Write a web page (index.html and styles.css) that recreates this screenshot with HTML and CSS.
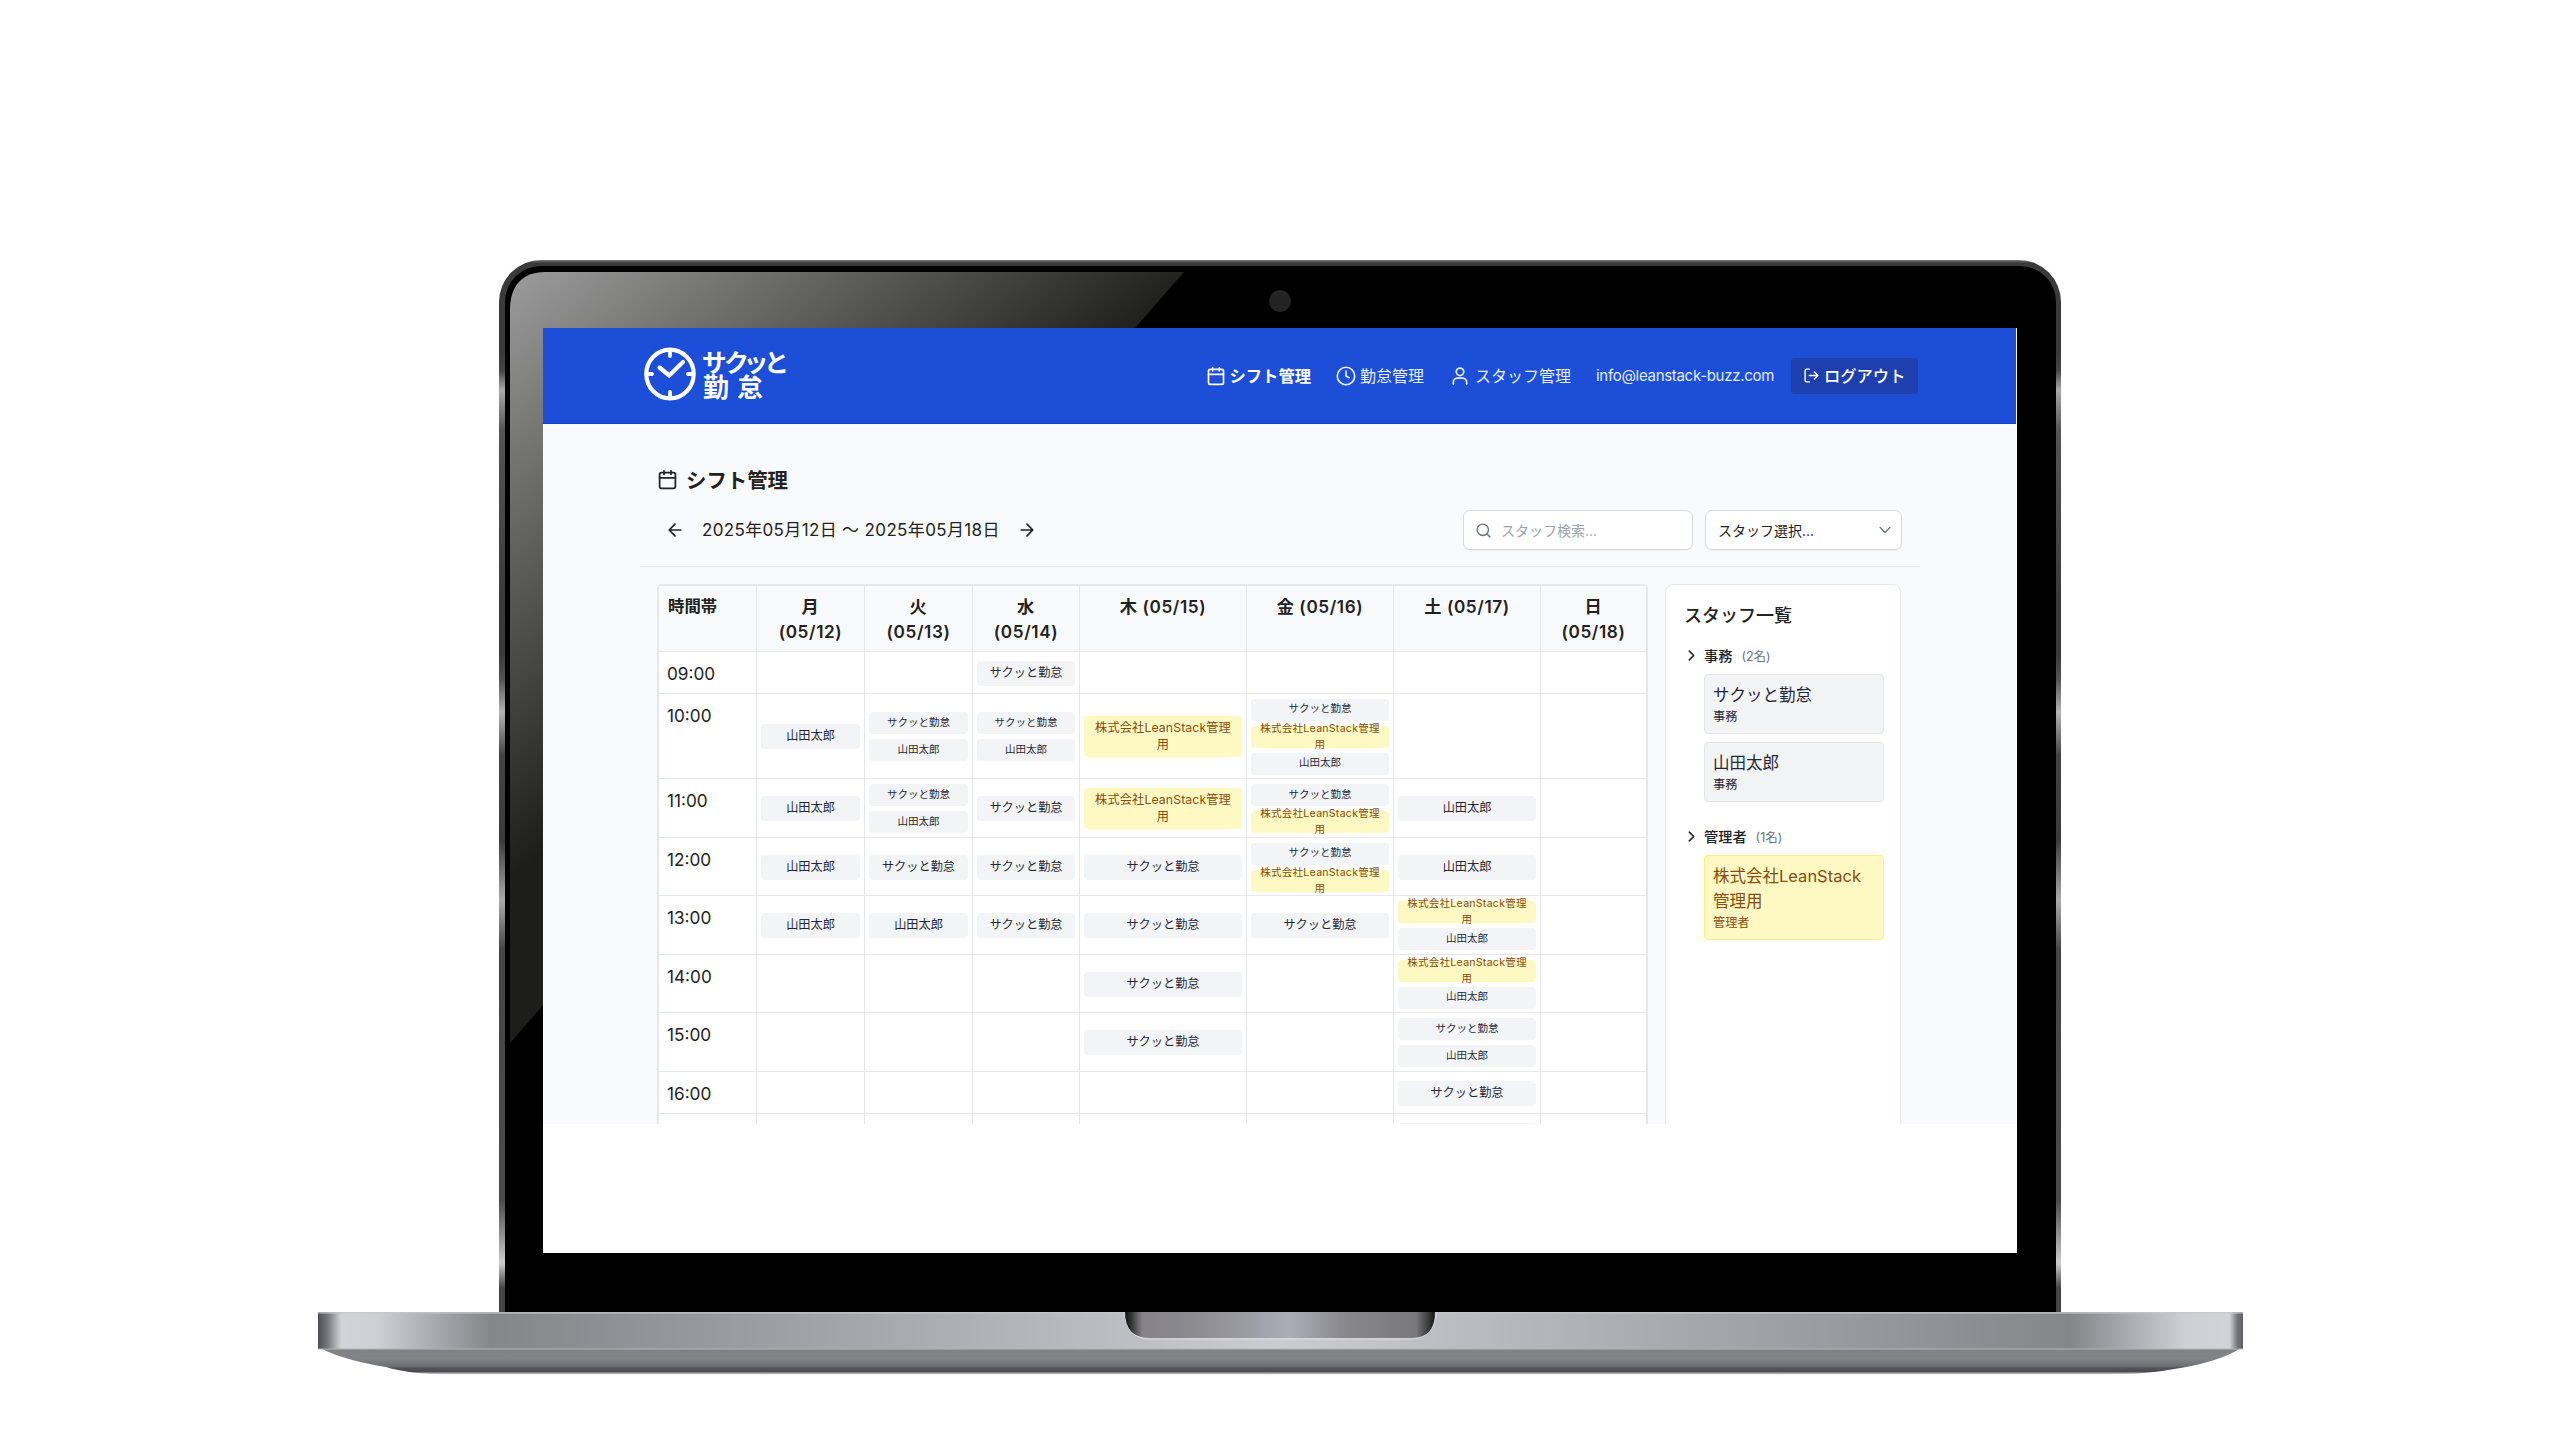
FILE: index.html
```html
<!DOCTYPE html>
<html lang="ja">
<head>
<meta charset="utf-8">
<title>サクッと勤怠 - シフト管理</title>
<link rel="stylesheet" href="styles.css">
</head>
<body>
<div class="laptop">
  <div class="lid">
    <svg class="glare" viewBox="0 0 1551 1040" preserveAspectRatio="none">
      <defs>
        <linearGradient id="shine" gradientUnits="userSpaceOnUse" x1="0" y1="0" x2="300" y2="348">
          <stop offset="0" stop-color="#9c9c9c"/>
          <stop offset="1" stop-color="#1d1d1b"/>
        </linearGradient>
      </defs>
      <path d="M35 0H674L0 771V38C0 14 12 0 35 0Z" fill="url(#shine)"/>
    </svg>
    <span class="camera"></span>
    <div class="screen">
      <div class="app">
        <header class="topbar">
          <div class="brand">
            <svg class="brand-clock" viewBox="0 0 52 54" fill="none" stroke="#fff" stroke-linecap="round">
              <ellipse cx="26" cy="27" rx="23.7" ry="24.4" stroke-width="4.2"/>
              <path d="M26 4v5M26 45v5M3 27h5M44 27h5" stroke-width="3.8"/>
              <path d="M15.5 20.5l9.8 8L39 15" stroke-width="4.2" stroke-linejoin="round"/>
            </svg>
            <div class="brand-name"><span class="brand-top">サクッと</span><span class="brand-bottom">勤怠</span></div>
          </div>
          <nav class="nav">
            <a class="nav-item active n1"><svg class="ic" viewBox="0 0 24 24"><rect x="3" y="4" width="18" height="18" rx="2"/><path d="M8 2v4M16 2v4M3 10h18"/></svg>シフト管理</a>
            <a class="nav-item n2"><svg class="ic" viewBox="0 0 24 24"><circle cx="12" cy="12" r="10.5"/><path d="M12 6v6l4 2"/></svg>勤怠管理</a>
            <a class="nav-item n3"><svg class="ic" viewBox="0 0 24 24"><circle cx="12" cy="7" r="4.5"/><path d="M20 22v-2.500a5 5 0 0 0-5-5H9a5 5 0 0 0-5 5V22"/></svg>スタッフ管理</a>
            <span class="email">info@leanstack-buzz.com</span>
            <a class="logout"><svg class="ic" viewBox="0 0 24 24"><path d="M9 21H5a2 2 0 0 1-2-2V5a2 2 0 0 1 2-2h4M16 17l5-5-5-5M21 12H9"/></svg>ログアウト</a>
          </nav>
        </header>
        <main class="main">
          <h1 class="title"><svg class="ic" viewBox="0 0 24 24"><rect x="3" y="4" width="18" height="18" rx="2"/><path d="M8 2v4M16 2v4M3 10h18"/></svg>シフト管理</h1>
          <div class="toolbar">
            <div class="range">
              <svg class="ic" viewBox="0 0 24 24"><path d="M12 19l-7-7 7-7M19 12H5"/></svg>
              <span class="dates">2025年05月12日 〜 2025年05月18日</span>
              <svg class="ic" viewBox="0 0 24 24"><path d="M5 12h14M12 5l7 7-7 7"/></svg>
            </div>
            <div class="search"><svg class="ic" viewBox="0 0 24 24"><circle cx="11" cy="11" r="8"/><path d="M21 21l-4.300-4.300"/></svg>スタッフ検索...</div>
            <div class="select">スタッフ選択...<svg class="ic" viewBox="0 0 24 24"><path d="M3.500 7.500l8.500 9 8.500-9"/></svg></div>
          </div>
          <div class="columns">
            <section class="schedule">
              <div class="th first">時間帯</div><div class="th">月<br>(05/12)</div><div class="th">火<br>(05/13)</div><div class="th">水<br>(05/14)</div><div class="th">木 (05/15)</div><div class="th">金 (05/16)</div><div class="th">土 (05/17)</div><div class="th">日<br>(05/18)</div>

              <div class="time">09:00</div><div class="td"></div><div class="td"></div><div class="td"><b>サクッと勤怠</b></div><div class="td"></div><div class="td"></div><div class="td"></div><div class="td"></div>

              <div class="time">10:00</div><div class="td"><b>山田太郎</b></div><div class="td multi"><b>サクッと勤怠</b><b>山田太郎</b></div><div class="td multi"><b>サクッと勤怠</b><b>山田太郎</b></div><div class="td"><b class="admin">株式会社LeanStack管理<br>用</b></div><div class="td multi"><b>サクッと勤怠</b><b class="admin">株式会社LeanStack管理<br>用</b><b>山田太郎</b></div><div class="td"></div><div class="td"></div>

              <div class="time">11:00</div><div class="td"><b>山田太郎</b></div><div class="td multi"><b>サクッと勤怠</b><b>山田太郎</b></div><div class="td"><b>サクッと勤怠</b></div><div class="td"><b class="admin">株式会社LeanStack管理<br>用</b></div><div class="td multi"><b>サクッと勤怠</b><b class="admin">株式会社LeanStack管理<br>用</b></div><div class="td"><b>山田太郎</b></div><div class="td"></div>

              <div class="time">12:00</div><div class="td"><b>山田太郎</b></div><div class="td"><b>サクッと勤怠</b></div><div class="td"><b>サクッと勤怠</b></div><div class="td"><b>サクッと勤怠</b></div><div class="td multi"><b>サクッと勤怠</b><b class="admin">株式会社LeanStack管理<br>用</b></div><div class="td"><b>山田太郎</b></div><div class="td"></div>

              <div class="time">13:00</div><div class="td"><b>山田太郎</b></div><div class="td"><b>山田太郎</b></div><div class="td"><b>サクッと勤怠</b></div><div class="td"><b>サクッと勤怠</b></div><div class="td"><b>サクッと勤怠</b></div><div class="td multi"><b class="admin">株式会社LeanStack管理<br>用</b><b>山田太郎</b></div><div class="td"></div>

              <div class="time">14:00</div><div class="td"></div><div class="td"></div><div class="td"></div><div class="td"><b>サクッと勤怠</b></div><div class="td"></div><div class="td multi"><b class="admin">株式会社LeanStack管理<br>用</b><b>山田太郎</b></div><div class="td"></div>

              <div class="time">15:00</div><div class="td"></div><div class="td"></div><div class="td"></div><div class="td"><b>サクッと勤怠</b></div><div class="td"></div><div class="td multi"><b>サクッと勤怠</b><b>山田太郎</b></div><div class="td"></div>

              <div class="time">16:00</div><div class="td"></div><div class="td"></div><div class="td"></div><div class="td"></div><div class="td"></div><div class="td"><b>サクッと勤怠</b></div><div class="td"></div>

              <div class="time"></div><div class="td"></div><div class="td"></div><div class="td"></div><div class="td"></div><div class="td"></div><div class="td"><b></b></div><div class="td"></div>
            </section>
            <aside class="staff">
              <h2>スタッフ一覧</h2>
              <div class="group"><svg class="ic" viewBox="0 0 24 24"><path d="M8 4l8 8-8 8"/></svg>事務<small>(2名)</small></div>
              <div class="person"><span>サクッと勤怠</span><em>事務</em></div>
              <div class="person"><span>山田太郎</span><em>事務</em></div>
              <div class="group second"><svg class="ic" viewBox="0 0 24 24"><path d="M8 4l8 8-8 8"/></svg>管理者<small>(1名)</small></div>
              <div class="person admin"><span>株式会社LeanStack<br>管理用</span><em>管理者</em></div>
            </aside>
          </div>
        </main>
      </div>
    </div>
  </div>
  <svg class="base" viewBox="0 0 1925 64">
    <defs>
      <linearGradient id="deck" gradientUnits="userSpaceOnUse" x1="0" x2="1925" y1="0" y2="0">
        <stop offset="0" stop-color="#4d4d54"/><stop offset=".005" stop-color="#77777e"/><stop offset=".012" stop-color="#d2d3d8"/><stop offset=".03" stop-color="#cfd0d5"/><stop offset=".09" stop-color="#85868a"/>
        <stop offset=".5" stop-color="#cbccd2"/><stop offset=".91" stop-color="#85868a"/><stop offset=".97" stop-color="#cfd0d5"/><stop offset=".993" stop-color="#d2d3d8"/><stop offset=".997" stop-color="#77777e"/><stop offset="1" stop-color="#5d5d64"/>
      </linearGradient>
      <linearGradient id="under" x1="0" x2="0" y1="0" y2="1">
        <stop offset="0" stop-color="#808185"/><stop offset=".4" stop-color="#828387"/><stop offset=".68" stop-color="#707175"/><stop offset=".76" stop-color="#535258"/><stop offset=".9" stop-color="#4b4a51"/><stop offset=".93" stop-color="#8d8b90"/><stop offset="1" stop-color="#e4e3e5"/>
      </linearGradient>
      <linearGradient id="notch" x1="0" x2="1" y1="0" y2="0">
        <stop offset="0" stop-color="#111"/><stop offset=".02" stop-color="#333"/><stop offset=".055" stop-color="#858389"/><stop offset=".2" stop-color="#8a898e"/><stop offset=".4" stop-color="#9d9da4"/><stop offset=".53" stop-color="#adadb8"/><stop offset=".7" stop-color="#89898d"/><stop offset=".94" stop-color="#78787d"/><stop offset=".98" stop-color="#3a3a3d"/><stop offset="1" stop-color="#111"/>
      </linearGradient>
      <filter id="soft" x="-1%" y="-10%" width="102%" height="120%"><feGaussianBlur stdDeviation=".7"/></filter>
    </defs>
    <path d="M2 36H1923Q1900 51 1850 58Q1828 62 1790 62.500H130Q90 62 68 55Q25 48 2 36Z" fill="url(#under)" filter="url(#soft)"/>
    <path d="M0 0H1925V37H0Z" fill="url(#deck)"/>
    <path d="M0 .8H1925" stroke="#c6c6ca" stroke-width="1.200"/>
    <path d="M0 37H1925" stroke="#b4b5b9" stroke-width="1"/>
    <path d="M807 0V4Q810 27 832 27H1092Q1114 27 1118 4V0" fill="none" stroke="#dddee3" stroke-width="1"/>
    <path d="M807 0H1117Q1117 26 1094 26H832Q807 26 807 0Z" fill="url(#notch)"/>
  </svg>
</div>
</body>
</html>
```
FILE: styles.css
```css
* { box-sizing: border-box; }

body {
  margin: 0;
  width: 2560px;
  height: 1440px;
  overflow: hidden;
  background: #fff;
  color: #222;
  font-family: "Inter", "Noto Sans CJK JP", sans-serif;
}

.laptop { padding-top: 260px; }

/* lid */
.lid {
  position: relative;
  width: 1562px;
  height: 1052px;
  margin-left: 499px;
  padding: 68px 44px 0 44px;
  border-radius: 42px 42px 0 0;
  background: linear-gradient(#777, #3a3a3a 3px, #3a3a3a 90px, #444 110px, #aaa 130px, #555 170px, #3a3a3a 340px, #3a3a3a 395px, #555 420px, #b5b5b5 452px, #444 495px, #3a3a3a 580px, #aaa 640px, #444 690px, #4a4a4a 940px, #ccc 1003px, #444 1028px, #444);
}
.lid::before {
  content: "";
  position: absolute;
  inset: 6px 5px 0 6px;
  border-radius: 36px 36px 0 0;
  background: #000;
}
.glare {
  position: absolute;
  left: 11px;
  top: 12px;
  width: 1551px;
  height: 1040px;
}
.camera {
  position: absolute;
  left: 770px;
  top: 30px;
  width: 22px;
  height: 22px;
  border-radius: 50%;
  background: #232323;
}
.screen {
  position: relative;
  width: 1474px;
  height: 925px;
  background: #fff;
}
.app {
  height: 796px;
  overflow: hidden;
  background: #f9fafc;
}
.base {
  display: block;
  width: 1925px;
  height: 64px;
  margin-left: 318px;
}

.ic {
  flex: none;
  fill: none;
  stroke: currentColor;
  stroke-width: 2;
  stroke-linecap: round;
  stroke-linejoin: round;
}

/* top bar */
.topbar {
  display: flex;
  justify-content: space-between;
  width: 1473px;
  height: 96px;
  padding: 0 98px 0 101px;
  background: #1d4ed8;
  border-bottom: 1px solid #1240c8;
  color: #fff;
}
.brand { display: flex; padding-top: 19px; }
.brand-clock { width: 52px; height: 54px; }
.brand-name {
  display: flex;
  flex-direction: column;
  padding: 2px 0 0 6px;
  font: 700 26px/25px "Noto Sans CJK JP", sans-serif;
  white-space: nowrap;
}
.brand-top { font-size: 25px; font-feature-settings: "palt"; letter-spacing: -1.300px; }
.brand-bottom { font-size: 26px; line-height: 24px; letter-spacing: 8px; padding-left: 1px; }

.nav {
  display: flex;
  align-items: center;
  height: 95px;
  font-size: 16px;
  line-height: 24px;
  white-space: nowrap;
}
.nav-item { display: flex; align-items: center; }
.nav .ic { width: 20px; height: 20px; margin-right: 4px; }
.active { font-weight: 700; font-size: 16.300px; }
.n2, .n3 { color: #e6eeff; }
.n2 { margin-left: 25px; }
.n3 { margin-left: 26px; }
.n3 .ic { margin-right: 5px; }
.email { margin-left: 25px; width: 178px; font-size: 15px; letter-spacing: -.3px; color: #e3ebff; }
.nav .logout {
  display: flex;
  align-items: center;
  width: 127px;
  height: 36px;
  margin-left: 17px;
  padding-left: 12px;
  border-radius: 4px;
  background: #1e40af;
  font-size: 16.300px;
  font-weight: 500;
}
.nav .logout .ic { width: 17px; height: 17px; margin-right: 4px; }

/* page */
.main { padding: 41px 97px 0; }
.title {
  display: flex;
  align-items: center;
  margin: 0 0 0 17px;
  height: 28px;
  font-size: 20.400px;
  font-weight: 700;
}
.title .ic { width: 21px; height: 21px; margin: 0 8px 0 0; }

.toolbar {
  display: flex;
  align-items: center;
  height: 74px;
  margin-bottom: 17px;
  padding: 1px 18px 0 25px;
  border-bottom: 1px solid #e5e7eb;
  white-space: nowrap;
}
.range { display: flex; align-items: center; margin-right: auto; }
.range .ic { width: 20px; height: 20px; }
.dates { width: 298px; margin: 0 17px 0 17px; font-size: 17px; line-height: 24px; letter-spacing: .35px; }
.search, .select {
  display: flex;
  align-items: center;
  height: 40px;
  border: 1px solid #d6d9df;
  border-radius: 7px;
  background: #fff;
  font-size: 14px;
  box-shadow: 0 1px 1px rgba(0, 0, 0, .04);
}
.search { width: 230px; padding-left: 11px; color: #9ca3af; }
.search .ic { width: 17px; height: 17px; margin-right: 9px; color: #6b7280; }
.select { justify-content: space-between; width: 197px; margin-left: 12px; padding: 0 9px 0 12px; }
.select .ic { width: 14px; height: 14px; color: #555b66; }

.columns { display: flex; align-items: flex-start; gap: 17px; padding-left: 17px; }

/* weekly grid */
.schedule {
  display: grid;
  grid-template-columns: 98px 108px 108px 107px 167px 147px 147px 105px;
  grid-template-rows: 66px 42px 85px 59px 58px 59px 58px 59px 42px 42px;
  border: 2px solid #e5e7eb;
  border-radius: 5px 5px 0 0;
  background: #fff;
}
.th, .td, .time { border-right: 1px solid #e5e7eb; border-bottom: 1px solid #e5e7eb; }
.schedule > :nth-child(8n) { border-right: 0; }
.th {
  padding-top: 8px;
  background: #f9fafc;
  font-size: 17.200px;
  font-weight: 600;
  line-height: 25px;
  letter-spacing: .6px;
  text-align: center;
}
.th.first { padding-left: 9px; font-size: 16.400px; letter-spacing: 0; text-align: left; }
.time { padding: 9px 0 0 8px; font-size: 17.200px; line-height: 25px; }
.td {
  display: flex;
  flex-direction: column;
  justify-content: center;
  gap: 5px;
  padding: 1px 4px 0;
}
.td b {
  display: flex;
  align-items: center;
  justify-content: center;
  flex: none;
  height: 25px;
  border-radius: 4px;
  background: #f3f4f6;
  color: #1f2937;
  font-size: 12.200px;
  font-weight: 400;
  line-height: 16.400px;
  text-align: center;
  white-space: nowrap;
}
.td .admin { height: 41px; background: #fef9c3; color: #854d0e; letter-spacing: .15px; }
.td.multi b { height: 22px; font-size: 10.500px; }
.td.multi .admin { line-height: 16px; letter-spacing: .3px; }

/* staff list */
.staff {
  width: 236px;
  height: 700px;
  padding: 18px 16px 0 18px;
  border: 1px solid #e5e7eb;
  border-radius: 8px;
  background: #fff;
}
.staff h2 { margin: 0 0 14px; font-size: 18px; font-weight: 500; line-height: 26px; }
.group {
  display: flex;
  align-items: center;
  height: 24px;
  margin-bottom: 7px;
  font-size: 14.200px;
  font-weight: 500;
}
.group .ic { width: 13px; height: 13px; margin: 0 6px 0 1px; stroke-width: 3; }
.group small { margin-left: 9px; font-size: 12.500px; font-weight: 400; color: #6b7280; }
.group.second { margin-top: 22px; }
.person {
  margin: 0 0 8px 20px;
  padding: 8px 0 8px 8px;
  border: 1px solid #e5e7eb;
  border-radius: 4px;
  background: #f3f4f6;
  color: #1f2937;
}
.person span, .person em { display: block; font-style: normal; }
.person span { font-size: 16.500px; line-height: 25px; }
.person em { font-size: 12.200px; line-height: 17px; }
.person.admin { border-color: #fdee8a; background: #fef9c3; color: #854d0e; }
```
